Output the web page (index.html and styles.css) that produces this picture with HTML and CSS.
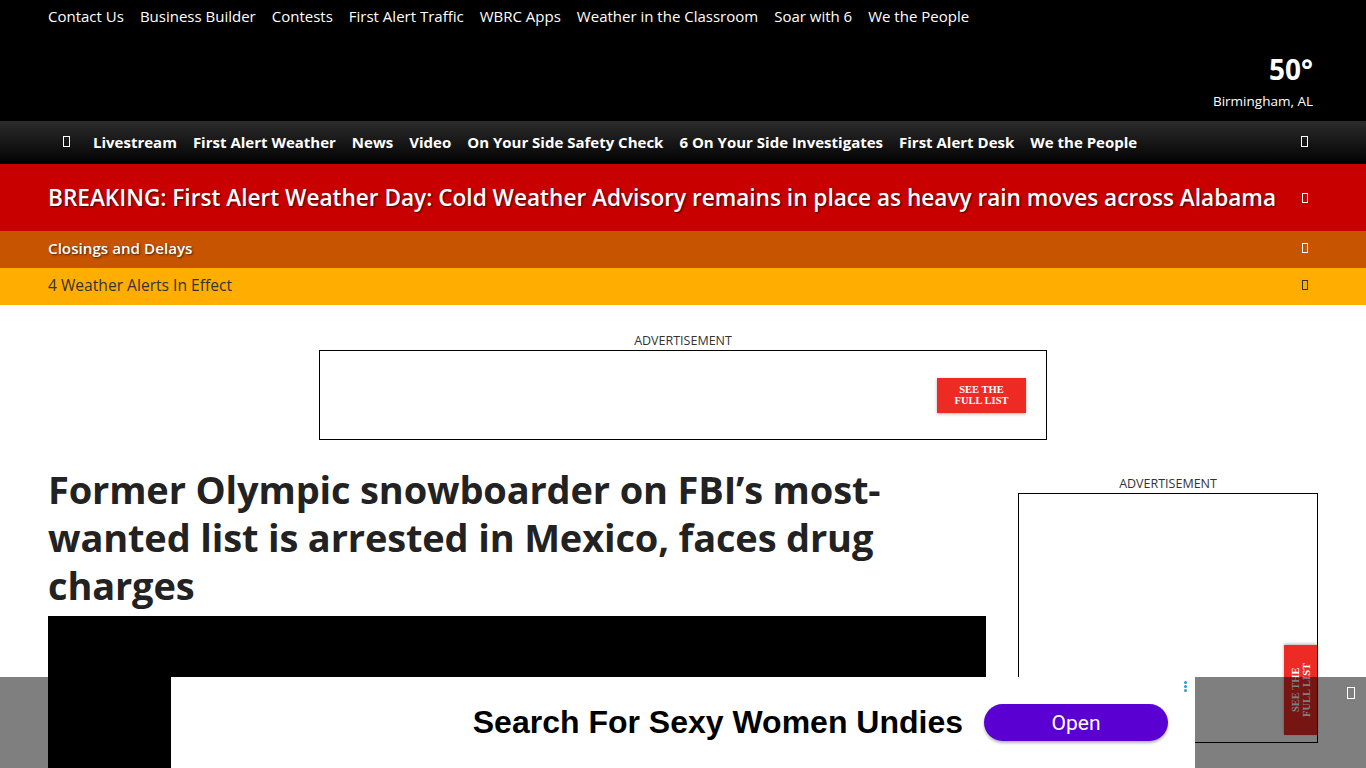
FILE: index.html
```html
<!DOCTYPE html>
<html lang="en">
<head>
    <meta charset="UTF-8">
    <meta name="viewport" content="width=device-width, initial-scale=1.0">
    <title>Former Olympic snowboarder on FBI's most-wanted list is arrested in Mexico - WBRC</title>
    <link rel="stylesheet" href="styles.css">
</head>
<body>
    <header class="site-header">
        <!-- Enlaces de utilidad -->
        <div class="top-bar">
            <nav class="utility-nav">
                <a href="#">Contact Us</a>
                <a href="#">Business Builder</a>
                <a href="#">Contests</a>
                <a href="#">First Alert Traffic</a>
                <a href="#">WBRC Apps</a>
                <a href="#">Weather in the Classroom</a>
                <a href="#">Soar with 6</a>
                <a href="#">We the People</a>
            </nav>
            <div class="weather">
                <div class="weather-temp">50°</div>
                <div class="weather-city">Birmingham, AL</div>
            </div>
        </div>

        <!-- Navegacion principal -->
        <div class="main-nav">
            <span class="glyph"></span>
            <nav class="main-links">
                <a href="#">Livestream</a>
                <a href="#">First Alert Weather</a>
                <a href="#">News</a>
                <a href="#">Video</a>
                <a href="#">On Your Side Safety Check</a>
                <a href="#">6 On Your Side Investigates</a>
                <a href="#">First Alert Desk</a>
                <a href="#">We the People</a>
            </nav>
            <span class="glyph"></span>
        </div>

        <!-- Alertas -->
        <div class="alert alert-breaking">
            <span>BREAKING: First Alert Weather Day: Cold Weather Advisory remains in place as heavy rain moves across Alabama</span>
            <span class="glyph"></span>
        </div>
        <div class="alert alert-closings">
            <span>Closings and Delays</span>
            <span class="glyph"></span>
        </div>
        <div class="alert alert-weather">
            <span>4 Weather Alerts In Effect</span>
            <span class="glyph"></span>
        </div>
    </header>

    <main class="page">
        <div class="ad-top">
            <div class="ad-label">ADVERTISEMENT</div>
            <div class="ad-box ad-leader">
                <a class="see-list" href="#">SEE THE<br>FULL LIST</a>
            </div>
        </div>

        <div class="article-layout">
            <article class="article">
                <h1 class="headline">Former Olympic snowboarder on FBI’s most-wanted list is arrested in Mexico, faces drug charges</h1>
                <div class="video"></div>
            </article>
            <aside class="sidebar">
                <div class="ad-label">ADVERTISEMENT</div>
                <div class="ad-box ad-square">
                    <a class="see-list see-list-vertical" href="#">SEE THE<br>FULL LIST</a>
                </div>
            </aside>
        </div>
    </main>

    <!-- Anuncio fijo inferior -->
    <div class="sticky-ad">
        <div class="sticky-inner">
            <span class="sticky-title">Search For Sexy Women Undies</span>
            <a class="sticky-btn" href="#">Open</a>
            <span class="sticky-dots"><i></i><i></i><i></i></span>
        </div>
        <span class="glyph sticky-close"></span>
    </div>
</body>
</html>
```

FILE: styles.css
```css
/* Reset */
* {
    margin: 0;
    padding: 0;
    box-sizing: border-box;
}

body {
    font-family: "Open Sans", "Noto Sans", Arial, sans-serif;
    background: #fff;
    color: #222;
    min-height: 100vh;
}

a {
    color: inherit;
    text-decoration: none;
}

/* Cajas de iconos que no cargan */
.glyph {
    display: inline-block;
    width: 7px;
    height: 11px;
    border: 1px solid currentColor;
    flex-shrink: 0;
}

/* Barra superior */
.top-bar {
    background: #000;
    color: #fff;
    height: 121px;
    padding: 0 53px 0 48px;
    display: flex;
    justify-content: space-between;
}

.utility-nav {
    display: flex;
    gap: 16px;
    font-size: 15px;
    padding-top: 6px;
    height: 30px;
}

.weather {
    text-align: right;
    padding-top: 51px;
}

.weather-temp {
    font-size: 28px;
    font-weight: 700;
    line-height: 36px;
}

.weather-city {
    font-size: 13.5px;
    line-height: 18px;
    margin-top: 5px;
}

/* Navegacion principal */
.main-nav {
    height: 43px;
    background: linear-gradient(#2c2c2c, #0a0a0a 80%, #000);
    color: #fff;
    display: flex;
    align-items: center;
    padding: 0 58px 2px 63px;
}

.main-links {
    display: flex;
    gap: 16px;
    font-weight: 700;
    font-size: 15px;
    margin-left: 23px;
    flex: 1;
}

/* Alertas */
.alert {
    display: flex;
    align-items: center;
    justify-content: space-between;
    padding: 0 58px 0 48px;
    color: #fff;
}

.alert-breaking {
    background: #c90000;
    height: 67px;
    font-size: 22.6px;
    font-weight: 600;
    text-shadow: 1px 1px 2px rgba(0, 0, 0, 0.7);
}

.alert-closings {
    background: #c75400;
    height: 37px;
    font-size: 15.2px;
    font-weight: 600;
    padding-bottom: 3px;
    text-shadow: 1px 1px 2px rgba(0, 0, 0, 0.6);
}

.alert-weather {
    background: #ffae00;
    height: 37px;
    font-size: 15.6px;
    padding-bottom: 3px;
    color: #333;
}

.alert .glyph {
    width: 6px;
    height: 10px;
}

/* Contenido */
.page {
    padding: 0 48px;
}

.ad-top {
    display: flex;
    flex-direction: column;
    align-items: center;
    padding-top: 27px;
}

.ad-label {
    font-size: 12.5px;
    line-height: 18px;
    color: #333;
    text-align: center;
}

.ad-box {
    border: 1px solid #000;
    background: #fff;
    position: relative;
}

.ad-leader {
    width: 728px;
    height: 90px;
    display: flex;
    align-items: center;
    justify-content: flex-end;
    padding-right: 20px;
}

.see-list {
    background: #ee2a24;
    color: #fff;
    font-family: "Liberation Serif", "DejaVu Serif", serif;
    font-weight: 700;
    font-size: 10.5px;
    line-height: 11px;
    text-align: center;
    width: 89px;
    height: 35px;
    display: flex;
    align-items: center;
    justify-content: center;
    box-shadow: 0 1px 3px rgba(0, 0, 0, 0.3);
}

.article-layout {
    display: flex;
    gap: 32px;
    margin-top: 25px;
}

.article {
    width: 938px;
}

.headline {
    font-size: 38px;
    line-height: 48px;
    font-weight: 700;
    color: #222;
    letter-spacing: -0.15px;
    margin-bottom: 7px;
}

.video {
    background: #000;
    height: 530px;
}

.sidebar {
    width: 300px;
    padding-top: 10px;
}

.ad-square {
    height: 250px;
}

/* Boton rotado sobre el anuncio lateral */
.see-list-vertical {
    position: absolute;
    right: 0;
    bottom: 7px;
    width: 33px;
    height: 90px;
    writing-mode: vertical-rl;
    transform: rotate(180deg);
}

/* Anuncio fijo */
.sticky-ad {
    position: fixed;
    left: 0;
    right: 0;
    bottom: 0;
    height: 91px;
    background: rgba(0, 0, 0, 0.5);
    display: flex;
    justify-content: center;
}

.sticky-inner {
    position: relative;
    width: 1024px;
    height: 91px;
    background: #fff;
    display: flex;
    align-items: center;
    justify-content: flex-end;
    padding-right: 27px;
    gap: 21px;
}

.sticky-title {
    font-family: "Liberation Sans", Arial, sans-serif;
    font-weight: 700;
    font-size: 32px;
    color: #000;
}

.sticky-btn {
    width: 184px;
    height: 37px;
    border-radius: 19px;
    background: #5b00d3;
    color: #fff;
    font-family: "Roboto", Arial, sans-serif;
    font-size: 21px;
    display: flex;
    align-items: center;
    justify-content: center;
    box-shadow: 0 2px 3px rgba(0, 0, 0, 0.3);
}

.sticky-dots {
    position: absolute;
    top: 4px;
    right: 8px;
    display: flex;
    flex-direction: column;
    gap: 1px;
}

.sticky-dots i {
    width: 3px;
    height: 3px;
    border-radius: 50%;
    background: #2a9bd6;
}

.sticky-close {
    position: absolute;
    right: 11px;
    top: 10px;
    color: #fff;
    width: 8px;
    height: 12px;
}
```
